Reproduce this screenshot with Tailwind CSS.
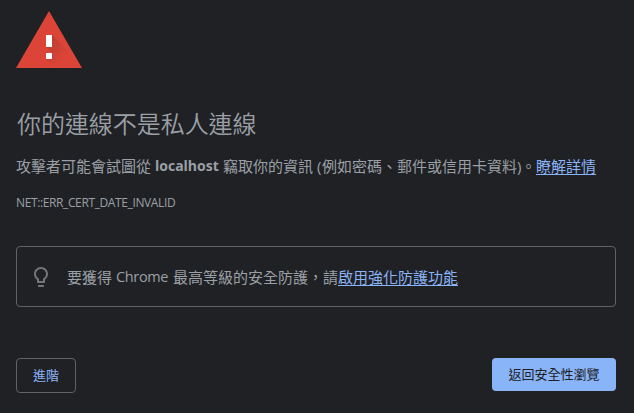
<!DOCTYPE html>
<html lang="zh-TW">
<head>
<meta charset="utf-8">
<title>隱私權錯誤</title>
<script src="https://cdn.jsdelivr.net/npm/@tailwindcss/browser@4"></script>
</head>
<body class="h-[413px] overflow-hidden bg-[#202124] px-4 pt-[11px] text-[#9aa0a6] font-['Open_Sans','Noto_Sans_CJK_TC',sans-serif]">
<main class="flex w-[600px] flex-col">
  <svg class="block h-[57px] w-[66px]" viewBox="0 0 66 57">
    <defs>
      <linearGradient id="shade" x1="34" y1="25" x2="56" y2="47" gradientUnits="userSpaceOnUse">
        <stop offset="0" stop-color="#b93c32"/>
        <stop offset="0.8" stop-color="#db4437"/>
      </linearGradient>
    </defs>
    <path d="M33 0 66 57H0Z" fill="#db4437"/>
    <path d="M36 24 52.500 40.500 62 57H39L30 48H36V42L30 36H36Z" fill="url(#shade)"/>
    <path d="M30 24h6v12h-6zM30 42h6v6h-6z" fill="#fff"/>
  </svg>
  <h1 class="mt-10 h-8 whitespace-nowrap pl-px text-[24px] font-[350] leading-8 tracking-[-0.05px]">你的連線不是私人連線</h1>
  <p class="mt-[14px] flex h-6 whitespace-nowrap text-[15px] leading-6"><span class="w-[139px]">攻擊者可能會試圖從</span><strong class="w-[68px] text-[14px] font-bold">localhost</strong><span class="w-[94px]">竊取你的資訊</span><span class="w-[5px]">(</span><span>例如密碼、郵件或信用卡資料</span><span class="w-[4px]">)</span><span>。</span><a class="text-[#8ab4f8] underline underline-offset-2" href="#">瞭解詳情</a></p>
  <div class="mt-[15px] h-5 whitespace-nowrap text-[12px] leading-5 tracking-[-0.38px]">NET::ERR_CERT_DATE_INVALID</div>
  <section class="mt-[33px] flex h-[61px] items-center rounded-[4px] border border-[#5f6368] pl-[12px]">
    <svg class="h-6 w-6 shrink-0" viewBox="0 0 24 24" fill="#757575"><path d="M9 21c0 .5.4 1 1 1h4c.6 0 1-.5 1-1v-1H9v1zm3-19C8.1 2 5 5.100 5 9c0 2.400 1.200 4.500 3 5.700V17c0 .5.4 1 1 1h6c.6 0 1-.5 1-1v-2.300c1.800-1.300 3-3.400 3-5.700 0-3.900-3.100-7-7-7zm2.900 11.100l-.9.6V16h-4v-2.300l-.9-.6C7.800 12.200 7 10.600 7 9c0-2.800 2.200-5 5-5s5 2.200 5 5c0 1.600-.8 3.200-2.100 4.100z"/></svg>
    <p class="ml-[14px] flex h-6 whitespace-nowrap text-[15px] leading-6"><span class="w-[49px]">要獲得</span><span class="w-[57px] text-[14.5px] tracking-[-0.35px]">Chrome</span><span>最高等級的安全防護，請</span><a class="text-[#8ab4f8] underline underline-offset-2" href="#">啟用強化防護功能</a></p>
  </section>
  <div class="mt-[51px] flex items-start justify-between text-[13px]">
    <button class="flex h-[35px] w-[60px] items-center justify-center rounded-[4px] border border-[#5f6368] text-[#8ab4f8]">進階</button>
    <button class="flex h-[33px] w-[124px] items-center justify-center rounded-[4px] bg-[#8ab4f8] text-[#202124]">返回安全性瀏覽</button>
  </div>
</main>
</body>
</html>
